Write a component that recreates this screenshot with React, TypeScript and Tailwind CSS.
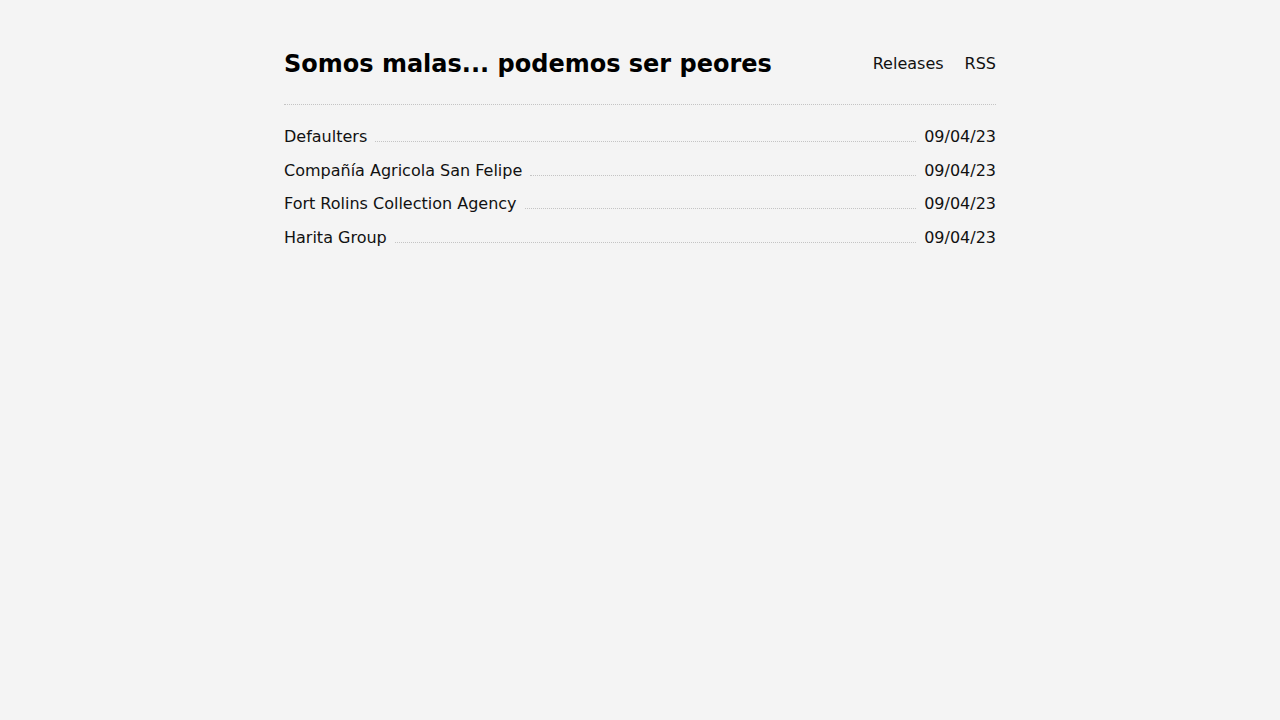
const releases = [
  { name: 'Defaulters', date: '09/04/23' },
  { name: 'Compañía Agricola San Felipe', date: '09/04/23' },
  { name: 'Fort Rolins Collection Agency', date: '09/04/23' },
  { name: 'Harita Group', date: '09/04/23' },
];

export default function App() {
  return (
    <div className="min-h-[720px] bg-[#f4f4f4] text-[#111] font-['DejaVu_Sans',sans-serif]">
      <div className="mx-auto w-[712px] pt-[48px]">
        {/* Header */}
        <header className="flex items-center justify-between border-b border-dotted border-[#c4c4c4] pb-[24px]">
          <h1 className="text-2xl leading-8 font-bold text-black">
            Somos malas... podemos ser peores
          </h1>
          <nav className="flex gap-[21px] text-base leading-6">
            <a href="#">Releases</a>
            <a href="#">RSS</a>
          </nav>
        </header>

        {/* Release list */}
        <ul className="mt-[15px]">
          {releases.map((r) => (
            <li key={r.name} className="flex items-baseline py-[4.85px] text-base leading-6">
              <a href="#">{r.name}</a>
              <span className="mx-2 h-0 flex-1 border-b border-dotted border-[#c4c4c4]" />
              <span>{r.date}</span>
            </li>
          ))}
        </ul>
      </div>
    </div>
  );
}
